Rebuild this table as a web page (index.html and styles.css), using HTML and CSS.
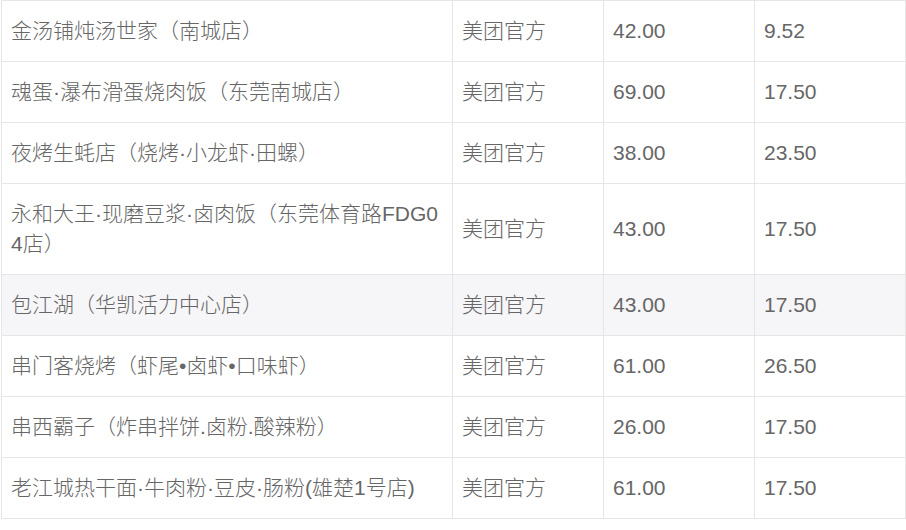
FILE: index.html
```
<!DOCTYPE html>
<html lang="zh-CN">
<head>
<meta charset="utf-8">
<title>外卖列表</title>
<link rel="stylesheet" href="styles.css">
</head>
<body>
<div class="wrap">
<table class="list">
<tbody>
<tr><td class="name">金汤铺炖汤世家（南城店）</td><td class="src">美团官方</td><td class="num">42.00</td><td class="num">9.52</td></tr>
<tr><td class="name">魂蛋·瀑布滑蛋烧肉饭（东莞南城店）</td><td class="src">美团官方</td><td class="num">69.00</td><td class="num">17.50</td></tr>
<tr><td class="name">夜烤生蚝店（烧烤·小龙虾·田螺）</td><td class="src">美团官方</td><td class="num">38.00</td><td class="num">23.50</td></tr>
<tr><td class="name">永和大王·现磨豆浆·卤肉饭（东莞体育路FDG04店）</td><td class="src">美团官方</td><td class="num">43.00</td><td class="num">17.50</td></tr>
<tr class="hl"><td class="name">包江湖（华凯活力中心店）</td><td class="src">美团官方</td><td class="num">43.00</td><td class="num">17.50</td></tr>
<tr><td class="name">串门客烧烤（虾尾•卤虾•口味虾）</td><td class="src">美团官方</td><td class="num">61.00</td><td class="num">26.50</td></tr>
<tr><td class="name">串西霸子（炸串拌饼.卤粉.酸辣粉）</td><td class="src">美团官方</td><td class="num">26.00</td><td class="num">17.50</td></tr>
<tr><td class="name">老江城热干面·牛肉粉·豆皮·肠粉(雄楚1号店)</td><td class="src">美团官方</td><td class="num">61.00</td><td class="num">17.50</td></tr>
</tbody>
</table>
</div>
</body>
</html>
```
FILE: styles.css
```
html, body {
  margin: 0;
  padding: 0;
  background: #ffffff;
}
.wrap {
  padding-left: 1px;
}
.list {
  border-collapse: separate;
  border-spacing: 0;
  table-layout: fixed;
  width: 905px;
  border-top: 1px solid #e6e6e6;
  border-left: 1px solid #e6e6e6;
  font-family: "Liberation Sans", "Noto Sans CJK SC", sans-serif;
  font-size: 21px;
  font-weight: 300;
  line-height: 30px;
  color: #666666;
}
.list td {
  box-sizing: border-box;
  padding: 15px 10px 15px 9px;
  border-right: 1px solid #e6e6e6;
  border-bottom: 1px solid #e6e6e6;
  vertical-align: middle;
  text-align: left;
}
.list td.name {
  width: 451px;
  word-break: break-all;
}
.list td.src,
.list td.num {
  width: 151px;
}
.list tr.hl td {
  background: #f6f5f7;
}
```
